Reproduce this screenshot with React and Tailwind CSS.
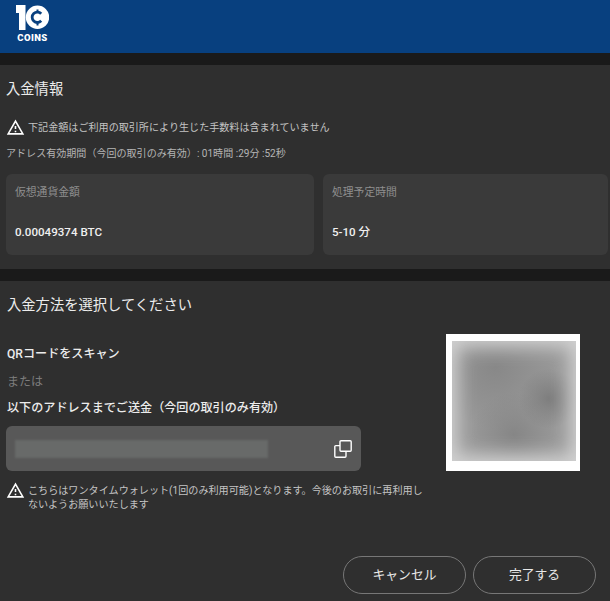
function WarnIcon({ className = "" }) {
  return (
    <svg viewBox="0 0 24 24" className={`h-[19px] w-[19px] shrink-0 fill-white ${className}`}>
      <path d="M12 5.99L19.53 19H4.47L12 5.99M12 2L1 21h22L12 2zm1 14h-2v2h2v-2zm0-6h-2v4h2v-4z" />
    </svg>
  );
}

function CopyIcon() {
  return (
    <svg viewBox="0 0 18 18" className="h-[18px] w-[18px] fill-none stroke-white stroke-[1.4]">
      <rect x="6" y="0.8" width="11.2" height="10.4" rx="1" />
      <path d="M6 5.6H1.8a1 1 0 0 0-1 1V16.2a1 1 0 0 0 1 1H11a1 1 0 0 0 1-1V11.2" />
    </svg>
  );
}

function Logo() {
  return (
    <div className="flex w-[33px] flex-col items-center">
      <svg viewBox="0 0 33 25" className="h-[25px] w-[33px]">
        <path d="M0 0H9.5V25H3V8H0z" fill="#fff" />
        <circle cx="21.5" cy="12.3" r="11.7" fill="#fff" />
        <path d="M25.2 8.8a5.2 5.2 0 1 0 0 7" fill="none" stroke="#08407f" strokeWidth="2.8" />
        <path d="M21.5 4.5v2.5M21.5 18v2.5" stroke="#08407f" strokeWidth="2" />
      </svg>
      <span className="mt-[3px] text-[9.5px] leading-[9px] font-black tracking-[0.4px] text-white">COINS</span>
    </div>
  );
}

function InfoCard({ label, value, className }) {
  return (
    <div className={`h-[81px] rounded-md bg-[#3a3a3a] px-[9px] pt-[8px] ${className}`}>
      <p className="pt-[3px] text-[10.8px] leading-[16px] text-[#8f8f8f]">{label}</p>
      <p className="mt-[23px] text-[11.6px] leading-[16px] font-medium text-[#f0f0f0]">{value}</p>
    </div>
  );
}

export default function App() {
  return (
    <div
      className="flex h-[601px] w-[610px] flex-col overflow-hidden bg-[#1a1a1a] text-white"
      style={{ fontFamily: "Roboto, 'Noto Sans CJK JP', sans-serif" }}
    >
      <header className="h-[53px] bg-[#08407f] pt-[5px] pl-[16px]">
        <Logo />
      </header>

      <section className="mt-[12px] h-[204px] bg-[#2f2f2f] pt-[14px] pl-[6px]">
        <h2 className="text-[14.3px] leading-[20px] text-[#ececec]">入金情報</h2>
        <div className="mt-[19px] flex items-center gap-[3px]">
          <WarnIcon />
          <p className="text-[10.08px] leading-[16px] text-[#c4c4c4]">下記金額はご利用の取引所により生じた手数料は含まれていません</p>
        </div>
        <p className="mt-[9px] text-[10.05px] leading-[16px] text-[#b5b5b5]">
          アドレス有効期間（今回の取引のみ有効）: 01時間 :29分 :52秒
        </p>
        <div className="mt-[12px] flex gap-[9px]">
          <InfoCard className="w-[308px]" label="仮想通貨金額" value="0.00049374 BTC" />
          <InfoCard className="w-[285px]" label="処理予定時間" value="5-10 分" />
        </div>
      </section>

      <section className="mt-[12px] flex-1 bg-[#2f2f2f] pl-[6px]">
        <h2 className="mt-[14px] pl-[1px] text-[14.3px] leading-[20px] text-[#ececec]">入金方法を選択してください</h2>

        <div className="mt-[19px] flex justify-between pr-[30px]">
          <div className="w-[355px] pt-[12px]">
            <p className="pl-[1px] text-[12.1px] leading-[16px] font-medium text-[#ececec]">QRコードをスキャン</p>
            <p className="mt-[12px] pl-[1px] text-[12px] leading-[16px] text-[#7c7c7c]">または</p>
            <p className="mt-[10px] pl-[1px] text-[12.1px] leading-[16px] font-medium text-[#ececec]">以下のアドレスまでご送金（今回の取引のみ有効）</p>
            <div className="mt-[10px] flex h-[45px] items-center justify-between rounded-md bg-[#585858] px-[9px]">
              <div className="h-[18px] w-[253px] bg-[#686a69] blur-[1px]" />
              <CopyIcon />
            </div>
          </div>

          <div className="h-[137px] w-[134px] bg-white pt-[7px] pl-[6px]">
            <div className="h-[120px] w-[124px] bg-[radial-gradient(circle_at_78%_48%,#7e7e7e_0%,transparent_26%),radial-gradient(circle_at_50%_78%,#868686_0%,transparent_38%),radial-gradient(circle_at_35%_22%,#888888_0%,transparent_50%),linear-gradient(#989898,#989898)] shadow-[inset_0_0_18px_6px_#d2d2d2]" />
          </div>
        </div>

        <div className="mt-[13px] flex w-[422px] items-start gap-[3px]">
          <WarnIcon className="-mt-[3px]" />
          <p className="text-[10.1px] leading-[14px] text-[#c4c4c4]">
            こちらはワンタイムウォレット(1回のみ利用可能)となります。今後のお取引に再利用しないようお願いいたします
          </p>
        </div>

        <div className="mt-[44px] flex justify-end gap-[7px] pr-[14px]">
          <button className="h-[38px] w-[123px] rounded-full border border-[#777] text-[12.8px] text-[#e8e8e8]">キャンセル</button>
          <button className="h-[38px] w-[123px] rounded-full border border-[#777] text-[12.8px] text-[#e8e8e8]">完了する</button>
        </div>
      </section>
    </div>
  );
}
